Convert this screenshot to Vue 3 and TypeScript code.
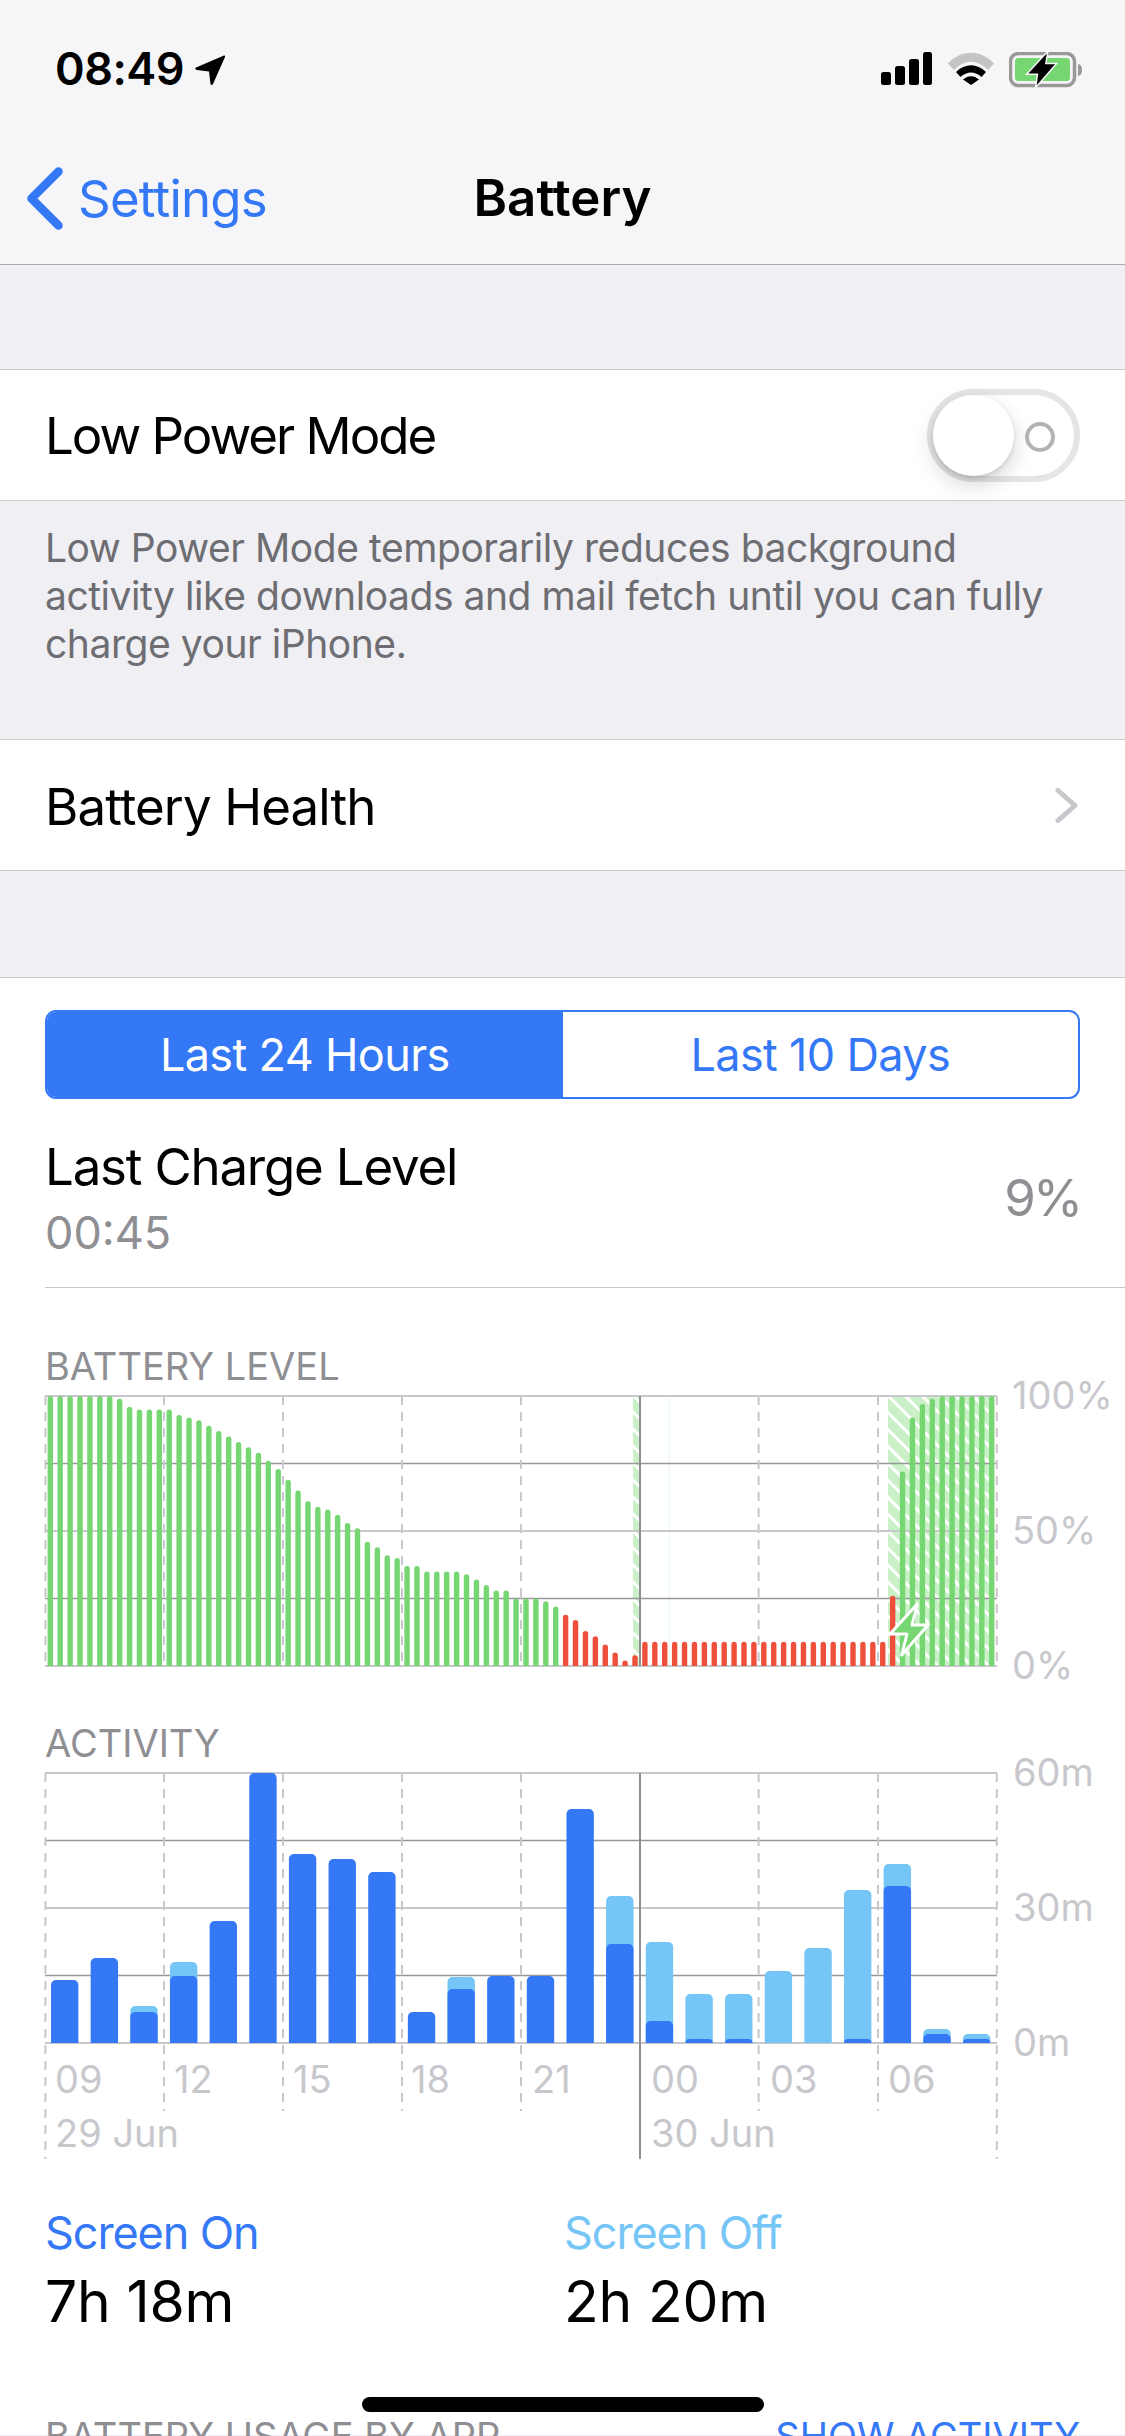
<template>
  <div class="screen">
    <header class="top">
      <div class="status">
        <div class="clock">
          <span>08:49</span>
          <svg class="arrow" width="32" height="32" viewBox="0 0 32 32">
            <path d="M30 1.500 2 13.500q-2 1.500 1 2.500l12 1.500 1.500 12.500q1 2 2.500 0L31 3q.5-2-1-1.500Z" fill="#000" />
          </svg>
        </div>
        <div class="icons">
          <svg width="52" height="33" viewBox="0 0 52 33">
            <rect x="1" y="20" width="10" height="13" rx="2.500" />
            <rect x="15" y="14" width="10" height="19" rx="2.500" />
            <rect x="29" y="7" width="10" height="26" rx="2.500" />
            <rect x="43" y="0" width="9" height="33" rx="2.500" />
          </svg>
          <svg class="wifi" width="46" height="33" viewBox="0 0 46 33">
            <path d="M0 11.500C13-3 33-3 46 11.500l-6 6.500C29 7 17 7 6 18Z" fill="#c4c4c4" />
            <path d="M8 20c9-9 21-9 30 0l-4.500 5C27 19 19 19 12.500 25Z" />
            <path d="M15 27.500c5-4.500 11-4.500 16 0L23 33Z" />
          </svg>
          <svg width="74" height="36" viewBox="0 0 74 36">
            <rect x="1.500" y="1.500" width="64" height="32" rx="8" fill="none" stroke="#999" stroke-width="3.500" />
            <rect x="6" y="6" width="55" height="23" rx="3.500" fill="#76d672" />
            <path d="M69 12c3 .5 4 3 4 6s-1 5.500-4 6Z" fill="#999" />
            <path d="M37.700 1.500 19.300 21.500h10l-1.600 11.700L46 12.200H36Z" stroke="#f6f6f8" stroke-width="3" paint-order="stroke" />
          </svg>
        </div>
      </div>
      <nav class="nav">
        <div class="back">
          <svg width="36" height="63" viewBox="0 0 36 63">
            <path d="M31.500 4.500 4.500 31.500l27 27" fill="none" stroke="#3478f6" stroke-width="8.500" stroke-linecap="round" stroke-linejoin="round" />
          </svg>
          <span>Settings</span>
        </div>
        <div class="title">Battery</div>
      </nav>
    </header>

    <section class="row first">
      <span class="low-power">Low Power Mode</span>
      <div class="toggle">
        <div class="knob"></div>
        <div class="off-mark"></div>
      </div>
    </section>
    <p class="note">
      Low Power Mode temporarily reduces background<br />
      activity like downloads and mail fetch until you can fully<br />
      charge your iPhone.
    </p>
    <section class="row">
      <span class="health">Battery Health</span>
      <svg width="26" height="37" viewBox="0 0 26 37">
        <path d="M4 3.500 21 18.500 4 33.500" fill="none" stroke="#c7c7cc" stroke-width="5" stroke-linecap="round" stroke-linejoin="round" />
      </svg>
    </section>
    <div class="gap"></div>

    <section class="panel">
      <div class="segments">
        <div class="segment active">Last 24 Hours</div>
        <div class="segment">Last 10 Days</div>
      </div>
      <div class="charge">
        <div>
          <div class="charge-title">Last Charge Level</div>
          <div class="charge-time">00:45</div>
        </div>
        <div class="charge-value">9%</div>
      </div>

      <div class="label level-label">BATTERY LEVEL</div>
      <svg class="chart level-chart" width="1125" height="332" viewBox="0 -20 1125 332">
        <defs>
          <pattern id="hatch" width="12" height="12" patternUnits="userSpaceOnUse" patternTransform="rotate(45)">
            <rect width="12" height="12" fill="#c9f0c6" />
            <rect width="12" height="3" fill="#fff" />
          </pattern>
        </defs>
        <rect x="633" y="8" width="7" height="270" fill="url(#hatch)" />
        <rect x="888" y="8" width="101" height="270" fill="url(#hatch)" />
        <rect x="668" y="8" width="3" height="270" fill="#f6fcf6" />
        <line v-for="g in levelGrid" :key="g.y" :x1="45" x2="997" :y1="g.y" :y2="g.y" :stroke="g.color" :stroke-width="g.w" />
        <line v-for="x in dashedX" :key="x" :x1="x" :x2="x" y1="8" y2="278" class="dash" />
        <line x1="640" x2="640" y1="8" y2="278" class="solid" />
        <path v-for="b in levelBars" :key="b.x" :d="b.d" :fill="b.fill" />
        <path d="M917.300 216 890 246H907L901.700 267 928 237H912Z" fill="#76d672" stroke="#fff" stroke-width="3" stroke-linejoin="round" />
        <text v-for="t in levelAxis" :key="t.text" x="1012" :y="t.y" class="axis">{{ t.text }}</text>
      </svg>

      <div class="label activity-label">ACTIVITY</div>
      <svg class="chart activity-chart" width="1125" height="420" viewBox="0 -20 1125 420">
        <line v-for="g in activityGrid" :key="g.y" :x1="45" x2="997" :y1="g.y" :y2="g.y" :stroke="g.color" :stroke-width="g.w" />
        <line v-for="l in activityDash" :key="l.x" :x1="l.x" :x2="l.x" y1="8" :y2="l.end" class="dash" />
        <line x1="640" x2="640" y1="8" y2="394" class="solid" />
        <template v-for="b in activityBars" :key="b.x">
          <path v-if="b.light" :d="b.light" fill="#76c5f7" />
          <path v-if="b.dark" :d="b.dark" fill="#3478f6" />
        </template>
        <text v-for="t in activityAxis" :key="t.text" x="1013" :y="t.y" class="axis">{{ t.text }}</text>
        <text v-for="t in hourLabels" :key="t.text" :x="t.x" y="328" class="axis">{{ t.text }}</text>
        <text x="55" y="382" class="axis">29 Jun</text>
        <text x="651" y="382" class="axis">30 Jun</text>
      </svg>

      <div class="usage">
        <div>
          <div class="usage-name on">Screen On</div>
          <div class="usage-value">7h 18m</div>
        </div>
        <div>
          <div class="usage-name off">Screen Off</div>
          <div class="usage-value">2h 20m</div>
        </div>
      </div>
      <div class="by-app">
        <span class="label">BATTERY USAGE BY APP</span>
        <span class="label link">SHOW ACTIVITY</span>
      </div>
    </section>
    <div class="home"></div>
  </div>
</template>

<script setup lang="ts">
const levels = [
  100, 100, 100, 100, 100, 100, 100, 99, 96, 95, 95, 95, 95, 93, 92, 91, 89, 87, 85, 83, 81, 79, 76, 73,
  69, 65, 61, 59, 58, 56, 53, 51, 46, 44, 41, 40, 37, 37, 35, 35, 35, 35, 34, 32, 30, 28, 28, 25, 25, 25,
  24, 22, 19, 17, 13, 11, 8, 5, 2, 4, 9, 9, 9, 9, 9, 9, 9, 9, 9, 9, 9, 9, 9, 9, 9, 9, 9, 9, 9, 9, 9, 9,
  9, 9, 9, 26, 72, 92, 97, 99, 100, 100, 100, 100, 100, 100
]

// heights are in px, [screen on, screen off + on]
const activity = [
  [63, 63], [85, 85], [31, 37], [67, 81], [122, 122], [270, 270], [189, 189], [184, 184],
  [171, 171], [31, 31], [54, 66], [67, 67], [67, 67], [234, 234], [99, 147], [22, 101],
  [4, 49], [4, 49], [0, 72], [0, 95], [4, 153], [157, 179], [9, 14], [4, 9]
]

const topRounded = (x: number, top: number, w: number, bottom: number, r: number) => {
  const rr = Math.min(r, bottom - top)
  return `M${x} ${bottom}V${top + rr}A${rr} ${rr} 0 0 1 ${x + rr} ${top}H${x + w - rr}A${rr} ${rr} 0 0 1 ${x + w} ${top + rr}V${bottom}Z`
}

const left = 45.4
const slot = 9.91

const levelBars = levels.map((v, i) => {
  const x = left + slot * i + 2.2
  const top = 278 - v * 2.7
  const red = i >= 52 && i <= 85
  return { x, d: topRounded(x, top, 5.4, 278, 2.7), fill: red ? '#ef503c' : '#76d672' }
})

const dashedX = [45.4, 164, 283, 402, 521, 758.6, 878, 996.8]

const gridAt = (ys: number[]) =>
  ys.map((y, i) => ({
    y,
    color: i % 2 === 0 ? '#c7c7cc' : '#98989c',
    w: i % 2 === 0 ? 2 : 1.5
  }))

const levelGrid = gridAt([8, 75.5, 143, 210.5, 278])
const activityGrid = gridAt([8, 75.5, 143, 210.5, 278])

const activityDash = dashedX.map((x) => ({
  x,
  end: x === 45.4 || x === 996.8 ? 394 : 346
}))

const activityBars = activity.map(([on, total], i) => {
  const x = left + 39.65 * i + 5.6
  return {
    x,
    light: total > on ? topRounded(x, 278 - total, 27.4, 278, 5) : '',
    dark: on > 0 ? topRounded(x, 278 - on, 27.4, 278, 5) : ''
  }
})

const levelAxis = [
  { text: '100%', y: 21 },
  { text: '50%', y: 156 },
  { text: '0%', y: 291 }
]

const activityAxis = [
  { text: '60m', y: 21 },
  { text: '30m', y: 156 },
  { text: '0m', y: 291 }
]

const hourLabels = [
  { text: '09', x: 55 },
  { text: '12', x: 174 },
  { text: '15', x: 293 },
  { text: '18', x: 411 },
  { text: '21', x: 532 },
  { text: '00', x: 651 },
  { text: '03', x: 770 },
  { text: '06', x: 888 }
]
</script>

<style>
html,
body {
  margin: 0;
  background: #fff;
}
</style>

<style scoped>
.screen {
  position: relative;
  width: 1125px;
  height: 2436px;
  overflow: hidden;
  background: #efeff4;
  color: #000;
  font-family: Inter, "Liberation Sans", sans-serif;
}

.top {
  height: 264px;
  background: #f6f6f8;
  border-bottom: 1px solid #a9a9ab;
}

.status {
  height: 134px;
  padding: 52px 42px 0 55px;
  box-sizing: border-box;
  display: flex;
  justify-content: space-between;
}

.clock {
  display: flex;
  align-items: flex-start;
  gap: 10px;
  font-size: 45px;
  line-height: 34px;
  font-weight: 600;
  letter-spacing: -0.5px;
}

.arrow {
  margin-top: 2px;
}

.icons {
  display: flex;
  align-items: flex-start;
  gap: 15px;
}

.wifi {
  margin-left: 1px;
}

.nav {
  position: relative;
  height: 130px;
  display: flex;
  align-items: flex-start;
}

.back {
  margin: 33px 0 0 27px;
  display: flex;
  align-items: center;
  gap: 15px;
  font-size: 51px;
  color: #3478f6;
  letter-spacing: -0.8px;
}

.title {
  position: absolute;
  left: 0;
  right: 0;
  top: 38px;
  text-align: center;
  font-size: 51px;
  line-height: 52px;
  font-weight: 600;
  letter-spacing: 0;
}

.row {
  height: 130px;
  background: #fff;
  border-top: 1px solid #c8c8cc;
  border-bottom: 1px solid #c8c8cc;
  display: flex;
  align-items: center;
  justify-content: space-between;
  padding: 0 45px;
  font-size: 51px;
}

.low-power {
  letter-spacing: -2px;
}

.health {
  margin-top: 2px;
  letter-spacing: -0.9px;
}

.first {
  margin-top: 104px;
}

.toggle {
  position: relative;
  width: 153px;
  height: 93px;
  box-sizing: border-box;
  border: 6px solid #e5e5e5;
  border-radius: 47px;
}

.knob {
  position: absolute;
  left: 0;
  top: 0;
  width: 81px;
  height: 81px;
  border-radius: 50%;
  background: #fff;
  box-shadow: 0 9px 22px rgba(0, 0, 0, 0.16), 0 2px 4px rgba(0, 0, 0, 0.12);
}

.off-mark {
  position: absolute;
  left: 92px;
  top: 27px;
  width: 30px;
  height: 30px;
  box-sizing: border-box;
  border: 4px solid #b3b3b3;
  border-radius: 50%;
}

.note {
  margin: 0;
  height: 238px;
  box-sizing: border-box;
  padding: 23px 45px 0;
  font-size: 39px;
  line-height: 48px;
  color: #6d6d72;
  letter-spacing: -0.45px;
}

.gap {
  height: 106px;
}

.panel {
  height: 1457px;
  background: #fff;
  border-top: 1px solid #c8c8cc;
}

.segments {
  margin: 32px 45px 0;
  height: 89px;
  box-sizing: border-box;
  border: 2px solid #3478f6;
  border-radius: 11px;
  overflow: hidden;
  display: grid;
  grid-template-columns: 1fr 1fr;
}

.segment {
  display: flex;
  align-items: center;
  justify-content: center;
  font-size: 45px;
  color: #3478f6;
  letter-spacing: -0.65px;
}

.segment.active {
  background: #3478f6;
  color: #fff;
}

.charge {
  margin-left: 45px;
  padding: 38px 45px 0 0;
  height: 189px;
  box-sizing: border-box;
  border-bottom: 1px solid #c8c8cc;
  display: flex;
  justify-content: space-between;
}

.charge-title {
  font-size: 51px;
  line-height: 60px;
  letter-spacing: -1.2px;
}

.charge-time {
  margin-top: 10px;
  font-size: 45px;
  line-height: 52px;
  color: #8e8e93;
}

.charge-value {
  margin-top: 31px;
  font-size: 51px;
  line-height: 60px;
  color: #8e8e93;
  letter-spacing: -3px;
}

.label {
  font-size: 38px;
  line-height: 46px;
  color: #8e8e93;
}

.level-label {
  margin: 55px 0 0 45px;
}

.activity-label {
  margin: 20px 0 0 45px;
}

.chart {
  display: block;
}

.level-chart {
  margin-top: -21px;
}

.activity-chart {
  margin-top: -21px;
}

.dash {
  stroke: #c7c7cc;
  stroke-width: 2;
  stroke-dasharray: 9 7;
}

.solid {
  stroke: #8e8e93;
  stroke-width: 2;
}

.axis {
  font-size: 38px;
  fill: #c7c7cc;
  font-family: Inter, "Liberation Sans", sans-serif;
}

.usage {
  margin: 42px 0 0 45px;
  display: grid;
  grid-template-columns: 519px 1fr;
}

.usage-name {
  font-size: 45px;
  line-height: 52px;
  letter-spacing: -1.1px;
}

.usage-name.on {
  color: #3478f6;
}

.usage-name.off {
  color: #76c5f7;
}

.usage-value {
  margin-top: 9px;
  font-size: 57px;
  line-height: 68px;
  letter-spacing: -0.2px;
}

.by-app {
  margin: 77px 45px 0 45px;
  display: flex;
  justify-content: space-between;
}

.label.link {
  color: #3478f6;
}

.home {
  position: absolute;
  left: 362px;
  top: 2397px;
  width: 402px;
  height: 15px;
  border-radius: 8px;
  background: #000;
}
</style>
